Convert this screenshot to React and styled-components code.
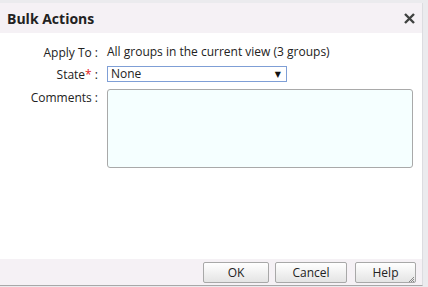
import React from 'react';
import styled, { createGlobalStyle } from 'styled-components';

const GlobalStyle = createGlobalStyle`
  html, body {
    margin: 0;
    padding: 0;
    background: #ebebee;
  }
  body {
    font-family: "Open Sans", "DejaVu Sans", sans-serif;
    font-size: 12px;
    color: #222;
  }
`;

const Frame = styled.div`
  width: 428px;
  height: 287px;
  padding-top: 3px;
  box-sizing: border-box;
  background: #ebebee;
`;

const Dialog = styled.div`
  width: 423px;
  height: 283px;
  display: flex;
  flex-direction: column;
  background: #fff;
  border-right: 1px solid #dcdce0;
  border-bottom: 1px solid #a8a8a8;
  box-sizing: border-box;
`;

const TitleBar = styled.div`
  height: 30px;
  display: flex;
  align-items: center;
  justify-content: space-between;
  padding: 0 6px 0 7px;
  background: #f5f1f5;
  h1 {
    margin: 0;
    font-size: 14px;
    font-weight: 700;
    color: #222;
  }
`;

const Close = styled.button`
  border: 0;
  background: none;
  padding: 0;
  width: 14px;
  height: 14px;
  display: flex;
  align-items: center;
  justify-content: center;
  cursor: pointer;
`;

const Body = styled.div`
  flex: 1;
  display: grid;
  grid-template-columns: 98px 1fr;
  column-gap: 9px;
  row-gap: 0;
  align-content: start;
  padding: 10px 10px 0 0;
`;

const Label = styled.div`
  text-align: right;
  line-height: 17px;
  height: 17px;
  margin-top: ${p => p.mt || 0}px;
  white-space: nowrap;
  span { color: #e02020; }
`;

const Value = styled.div`
  line-height: 17px;
  height: 17px;
  white-space: nowrap;
`;

const Select = styled.div`
  width: 180px;
  height: 16px;
  margin-top: ${p => p.mt || 0}px;
  box-sizing: border-box;
  border: 1px solid #7f9fd6;
  background: #fff;
  display: flex;
  align-items: center;
  justify-content: space-between;
  padding: 0 5px 0 3px;
  line-height: 14px;
`;

const Arrow = styled.span`
  font-size: 8px;
  color: #111;
`;

const TextArea = styled.textarea`
  width: 306px;
  height: 79px;
  margin-top: ${p => p.mt || 0}px;
  box-sizing: border-box;
  border: 1px solid #a9a9a9;
  border-radius: 3px;
  background: #f5ffff;
  resize: none;
  font: inherit;
  padding: 2px;
  outline: none;
`;

const Footer = styled.div`
  height: 26px;
  display: flex;
  justify-content: flex-end;
  align-items: center;
  gap: 6px;
  padding-right: 6px;
  background: #f5f1f5;
  position: relative;
`;

const Button = styled.button`
  width: ${p => p.w}px;
  height: 21px;
  margin-left: ${p => p.ml || 0}px;
  box-sizing: border-box;
  border: 1px solid #a8a8a8;
  border-radius: 2px;
  background: linear-gradient(#ffffff, #e4e4e4);
  font: inherit;
  font-size: 12px;
  color: #222;
  padding: 0;
  cursor: pointer;
`;

const Grip = styled.svg`
  position: absolute;
  right: 7px;
  bottom: 2px;
`;

export default function App() {
  return (
    <>
      <GlobalStyle />
      <Frame>
        <Dialog>
          <TitleBar>
            <h1>Bulk Actions</h1>
            <Close aria-label="Close">
              <svg width="11" height="11" viewBox="0 0 11 11">
                <path d="M1 1 L10 10 M10 1 L1 10" stroke="#3f4240" strokeWidth="2.4" />
              </svg>
            </Close>
          </TitleBar>
          <Body>
            <Label mt={1}>Apply To :</Label>
            <Value>All groups in the current view (3 groups)</Value>
            <Label mt={5}>State<span>*</span> :</Label>
            <Select mt={5}>
              <span>None</span>
              <Arrow>▼</Arrow>
            </Select>
            <Label mt={6}>Comments :</Label>
            <TextArea mt={6} />
          </Body>
          <Footer>
            <Button w={66}>OK</Button>
            <Button w={72}>Cancel</Button>
            <Button w={61} ml={2}>Help</Button>
            <Grip width="7" height="7" viewBox="0 0 7 7">
              <path d="M6 1 L1 6 M6 3 L3 6 M6 5 L5 6" stroke="#888" strokeWidth="1" />
            </Grip>
          </Footer>
        </Dialog>
      </Frame>
    </>
  );
}
